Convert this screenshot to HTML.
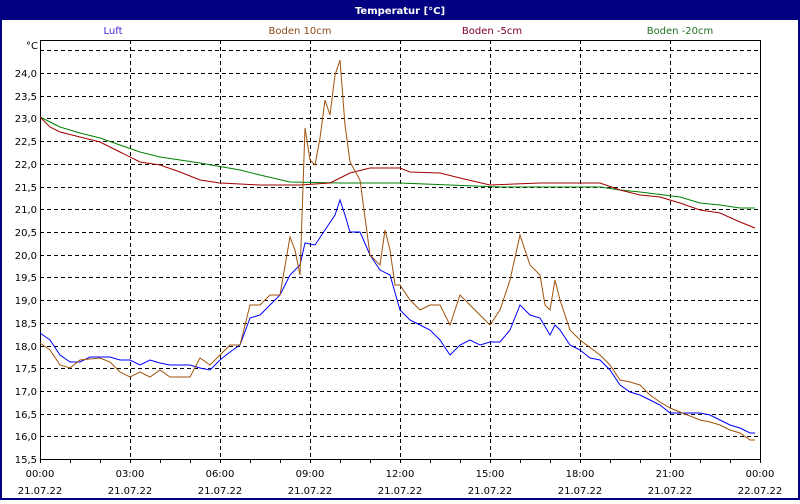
<!DOCTYPE html>
<html><head><style>
body{margin:0;width:800px;height:500px;overflow:hidden;background:#fff;font-family:"DejaVu Sans","Liberation Sans",sans-serif;}
</style></head><body>
<svg width="800" height="500" xmlns="http://www.w3.org/2000/svg" font-family="DejaVu Sans, Liberation Sans, sans-serif" font-size="10">
<rect x="0" y="0" width="800" height="500" fill="#fff"/>
<rect x="0" y="0" width="800" height="20" fill="#000080"/>
<text x="400" y="14" text-anchor="middle" fill="#fff" font-weight="bold" font-size="10">Temperatur [°C]</text>
<rect x="0" y="20" width="2" height="480" fill="#000080"/>
<rect x="798" y="20" width="2" height="480" fill="#000080"/>
<rect x="0" y="498" width="800" height="2" fill="#000080"/>
<text x="113" y="34" text-anchor="middle" fill="#4a1fd0">Luft</text>
<text x="300" y="34" text-anchor="middle" fill="#8b4a1a">Boden 10cm</text>
<text x="492" y="34" text-anchor="middle" fill="#800020">Boden -5cm</text>
<text x="680" y="34" text-anchor="middle" fill="#207020">Boden -20cm</text>
<g stroke="#000" stroke-width="1" stroke-dasharray="4,3" shape-rendering="crispEdges">
<line x1="40" y1="50.5" x2="760" y2="50.5"/>
<line x1="40" y1="73.5" x2="760" y2="73.5"/>
<line x1="40" y1="96.5" x2="760" y2="96.5"/>
<line x1="40" y1="118.5" x2="760" y2="118.5"/>
<line x1="40" y1="141.5" x2="760" y2="141.5"/>
<line x1="40" y1="164.5" x2="760" y2="164.5"/>
<line x1="40" y1="187.5" x2="760" y2="187.5"/>
<line x1="40" y1="209.5" x2="760" y2="209.5"/>
<line x1="40" y1="232.5" x2="760" y2="232.5"/>
<line x1="40" y1="255.5" x2="760" y2="255.5"/>
<line x1="40" y1="277.5" x2="760" y2="277.5"/>
<line x1="40" y1="300.5" x2="760" y2="300.5"/>
<line x1="40" y1="323.5" x2="760" y2="323.5"/>
<line x1="40" y1="346.5" x2="760" y2="346.5"/>
<line x1="40" y1="368.5" x2="760" y2="368.5"/>
<line x1="40" y1="391.5" x2="760" y2="391.5"/>
<line x1="40" y1="414.5" x2="760" y2="414.5"/>
<line x1="40" y1="436.5" x2="760" y2="436.5"/>
<line x1="130.5" y1="40" x2="130.5" y2="460"/>
<line x1="220.5" y1="40" x2="220.5" y2="460"/>
<line x1="310.5" y1="40" x2="310.5" y2="460"/>
<line x1="400.5" y1="40" x2="400.5" y2="460"/>
<line x1="490.5" y1="40" x2="490.5" y2="460"/>
<line x1="580.5" y1="40" x2="580.5" y2="460"/>
<line x1="670.5" y1="40" x2="670.5" y2="460"/>
</g>
<rect x="40.5" y="40.5" width="720" height="419" fill="none" stroke="#000" stroke-width="1" shape-rendering="crispEdges"/>
<g stroke="#000" shape-rendering="crispEdges">
<path d="M70.5 460v3M100.5 460v3M130.5 460v3M160.5 460v3M190.5 460v3M220.5 460v3M250.5 460v3M280.5 460v3M310.5 460v3M340.5 460v3M370.5 460v3M400.5 460v3M430.5 460v3M460.5 460v3M490.5 460v3M520.5 460v3M550.5 460v3M580.5 460v3M610.5 460v3M640.5 460v3M670.5 460v3M700.5 460v3M730.5 460v3M40.5 460v3M760.5 460v3"/>
</g>
<g text-anchor="end" fill="#000">
<text x="38" y="49">°C</text>
<text x="37" y="77">24,0</text><text x="37" y="100">23,5</text><text x="37" y="122">23,0</text>
<text x="37" y="145">22,5</text><text x="37" y="168">22,0</text><text x="37" y="191">21,5</text>
<text x="37" y="213">21,0</text><text x="37" y="236">20,5</text><text x="37" y="259">20,0</text>
<text x="37" y="281">19,5</text><text x="37" y="304">19,0</text><text x="37" y="327">18,5</text>
<text x="37" y="350">18,0</text><text x="37" y="372">17,5</text><text x="37" y="395">17,0</text>
<text x="37" y="418">16,5</text><text x="37" y="440">16,0</text><text x="37" y="463">15,5</text>
</g>
<g text-anchor="middle" fill="#000">
<text x="40" y="477">00:00</text><text x="130" y="477">03:00</text><text x="220" y="477">06:00</text>
<text x="310" y="477">09:00</text><text x="400" y="477">12:00</text><text x="490" y="477">15:00</text>
<text x="580" y="477">18:00</text><text x="670" y="477">21:00</text><text x="760" y="477">00:00</text>
<text x="40" y="494">21.07.22</text><text x="130" y="494">21.07.22</text><text x="220" y="494">21.07.22</text>
<text x="310" y="494">21.07.22</text><text x="400" y="494">21.07.22</text><text x="490" y="494">21.07.22</text>
<text x="580" y="494">21.07.22</text><text x="670" y="494">21.07.22</text><text x="760" y="494">22.07.22</text>
</g>
<g fill="none" stroke-width="1">
<polyline stroke="#008000" points="40,117 50,122 60,127 80,133 100,138 120,145 140,152 160,157 200,163 240,170 260,175 290,182 340,183 400,183 450,185 500,187 600,187 620,190 640,192 680,197 700,203 720,205 740,208 755,208"/>
<polyline stroke="#a00000" points="40,117 50,127 60,132 80,137 100,142 120,152 140,162 160,165 180,172 200,180 220,183 260,185 300,185 330,183 340,178 350,173 370,168 400,168 410,172 440,173 460,178 490,185 540,183 600,183 620,190 640,195 660,197 680,203 700,210 720,213 740,222 755,228"/>
<polyline stroke="#0000ff" points="40,333 50,340 60,355 70,362 80,362 90,357 110,357 120,360 130,360 140,365 150,360 160,363 170,365 190,365 200,368 210,370 220,360 230,352 240,345 250,318 260,315 270,305 280,295 290,275 300,265 305,243 315,245 325,230 335,215 340,200 345,215 350,232 360,232 370,255 380,270 390,275 400,310 410,320 420,325 430,330 440,340 450,355 460,345 470,340 480,345 490,342 500,342 510,330 520,305 530,315 540,318 550,335 555,325 560,330 570,345 580,350 590,358 600,360 610,370 620,385 630,392 640,395 650,400 660,405 670,413 700,413 710,415 720,420 730,425 740,428 750,433 755,433"/>
<polyline stroke="#a0520a" points="40,343 50,350 60,365 70,368 80,360 100,358 110,362 120,372 130,377 140,372 150,377 160,370 170,377 190,377 200,358 210,365 220,355 230,345 240,345 250,305 260,305 270,295 280,295 290,237 295,250 300,275 305,128 310,160 315,165 320,138 325,100 330,115 335,75 340,60 345,125 350,162 360,180 370,255 380,265 385,230 390,250 395,285 400,285 410,300 420,310 430,305 440,305 450,325 460,295 470,305 480,315 490,325 500,310 510,280 520,235 530,265 540,275 545,305 550,310 555,280 560,300 570,330 580,340 600,355 610,365 620,380 630,382 640,385 650,395 660,402 670,408 680,412 700,420 710,422 720,425 730,430 740,433 750,440 755,440"/>
</g>
</svg>
</body></html>
